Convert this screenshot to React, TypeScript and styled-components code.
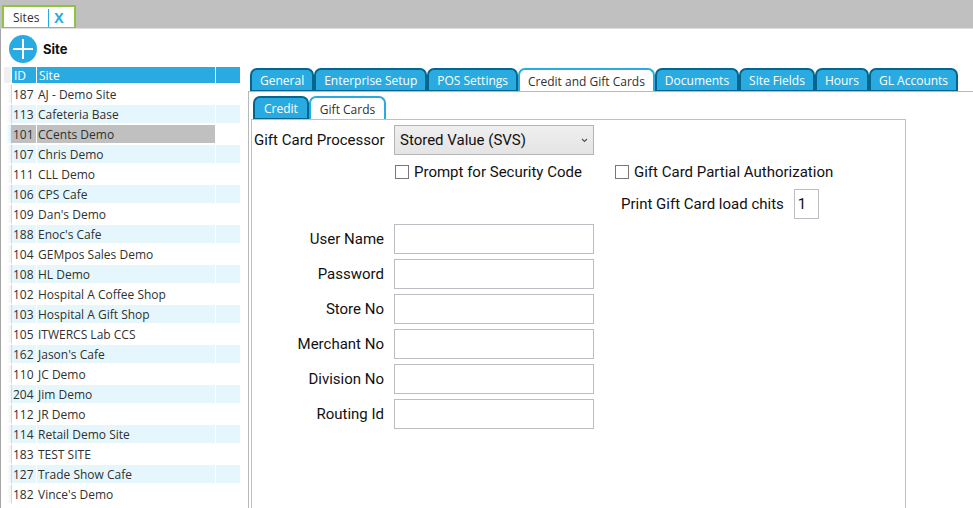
import React, { useState } from "react";
import styled, { createGlobalStyle, css } from "styled-components";

const blue = "#29abe2";
const darkBlue = "#05668d";
const uiFont = `"Segoe UI", "Open Sans", "Noto Sans", sans-serif`;
const formFont = `Roboto, "Liberation Sans", sans-serif`;

const GlobalStyle = createGlobalStyle`
  *, *::before, *::after { box-sizing: border-box; }
  html, body, #root { height: 100%; }
  body { margin: 0; overflow: hidden; background: #fff; }
  button, input, select { font: inherit; color: inherit; border-radius: 0; }
`;

const Page = styled.div`
  height: 100%;
  display: flex;
  flex-direction: column;
  font: 12px/16px ${uiFont};
  color: #303030;
`;

const WindowBar = styled.header`
  display: flex;
  padding: 5px 2px 0;
  background: #c0c0c0;
`;

const WindowTab = styled.div`
  display: flex;
  align-items: center;
  height: 23px;
  padding-top: 2px;
  border: 2px solid #8cc63f;
  border-bottom-width: 1px;
  background: #fff;
`;

const WindowTitle = styled.button`
  padding: 0 9px;
  border: 0;
  background: none;
`;

const CloseButton = styled.button`
  padding: 0 10px 0 5px;
  border: 0;
  border-left: 1px solid ${blue};
  background: none;
  color: ${blue};
  font-size: 14px;
  line-height: 18px;
  font-weight: 700;
`;

const Workspace = styled.div`
  flex: 1;
  min-height: 0;
  display: flex;
  border-top: 1px solid #dedede;
  border-left: 1px solid #a6a6a6;
`;

const Sidebar = styled.aside`
  flex: none;
  width: 247px;
  padding: 5px 7px 0 3px;
`;

const SidebarTitle = styled.div`
  display: flex;
  align-items: center;
  gap: 6px;
  height: 30px;
  margin-bottom: 3px;
  padding-left: 5px;
`;

const AddButton = styled.button`
  display: flex;
  padding: 0;
  border: 0;
  background: none;
`;

const SidebarHeading = styled.h1`
  margin: 0;
  font: 700 13px/16px Inter, "Liberation Sans", sans-serif;
  color: #111;
`;

const SiteTable = styled.table`
  width: 100%;
  table-layout: fixed;
  border-collapse: separate;
  border-spacing: 0;
`;

const HandleCol = styled.col`
  width: 8px;
`;
const IdCol = styled.col`
  width: 25px;
`;
const SpareCol = styled.col`
  width: 25px;
`;

const HeaderCell = styled.th<{ $handle?: boolean }>`
  height: 17px;
  padding: 1px 0 0 2px;
  border: 0 solid #fff;
  border-width: 0 1px 1px 0;
  background: ${(p) => (p.$handle ? "#f0f0f0" : blue)};
  color: #fff;
  font-weight: 400;
  line-height: 15px;
  text-align: left;
`;

const Cell = styled.td`
  height: 20px;
  padding: 2px 0 0 1px;
  border: 0 solid #fff;
  border-width: 1px 1px 1px 0;
  background-clip: padding-box;
  line-height: 16px;
  white-space: nowrap;
`;

const HandleCell = styled(Cell)<{ $active?: boolean }>`
  && {
    background: linear-gradient(
      to right,
      #fff 2px,
      ${(p) => (p.$active ? "#d9f1fb" : "#f4f4f4")}
    );
    background-clip: padding-box;
    border-right: 1px solid ${(p) => (p.$active ? "#8fd0f0" : "#d8d8d8")};
  }
`;

const SiteRow = styled.tr<{ $selected: boolean }>`
  cursor: default;
  &:nth-child(even) ${Cell} {
    background-color: #e5f7fd;
  }
  ${(p) =>
    p.$selected &&
    css`
      ${Cell}:nth-child(2), ${Cell}:nth-child(3) {
        background-color: #c0c0c0;
      }
    `}
`;

const Main = styled.main`
  flex: 1;
  min-width: 0;
  display: flex;
  flex-direction: column;
  padding-top: 39px;
`;

const TabList = styled.div`
  display: flex;
  padding-left: 2px;
`;

const Tab = styled.button<{ $active: boolean; $wide?: boolean }>`
  flex: none;
  height: 23px;
  padding: 2px ${(p) => (p.$wide ? 9 : 8)}px 0;
  border: 2px solid ${(p) => (p.$active ? blue : darkBlue)};
  border-bottom-width: ${(p) => (p.$active ? 0 : 1)}px;
  border-radius: 7px 7px 0 0;
  background: ${(p) => (p.$active ? "#fff" : blue)};
  color: ${(p) => (p.$active ? "#303030" : "#fff")};
  line-height: 16px;
  white-space: nowrap;
`;

const OuterPanel = styled.section`
  flex: 1;
  min-height: 0;
  display: flex;
  flex-direction: column;
  padding: 4px 67px 0 2px;
  border-top: 1px solid #b8b8b8;
  border-left: 1px solid #b8b8b8;
`;

const InnerPanel = styled.form`
  flex: 1;
  min-height: 0;
  border: 1px solid #c0c0c0;
  border-bottom: 0;
  padding: 5px 2px;
  font: 15px/20px ${formFont};
  color: #111;
`;

const FieldGrid = styled.div`
  display: grid;
  grid-template-columns: 130px 200px 1fr;
  grid-template-rows: 30px 24px;
  grid-auto-rows: 30px;
  column-gap: 10px;
  row-gap: 5px;
  align-items: center;
`;

const FieldLabel = styled.label`
  text-align: right;
  white-space: nowrap;
`;

const SelectBox = styled.div`
  display: grid;
  align-items: center;
  & > * {
    grid-area: 1 / 1;
  }
  svg {
    justify-self: end;
    margin-right: 6px;
    pointer-events: none;
  }
`;

const Select = styled.select`
  width: 100%;
  height: 30px;
  padding: 0 5px;
  border: 1px solid #b4b4b4;
  background: linear-gradient(#efefef, #e4e4e4);
  appearance: none;
`;

const TextBox = styled.input<{ $short?: boolean }>`
  width: ${(p) => (p.$short ? "25px" : "100%")};
  height: 30px;
  padding: 0 3px;
  border: 1px solid #bcbdc2;
  background: #fff;
  outline: none;
`;

const CheckLabel = styled.label<{ $inset?: boolean }>`
  display: flex;
  align-items: center;
  gap: 5px;
  margin-left: ${(p) => (p.$inset ? 11 : 1)}px;
  white-space: nowrap;
`;

const CheckBox = styled.input`
  appearance: none;
  width: 14px;
  height: 14px;
  margin: 0;
  border: 1px solid #777;
  background: #fff;
  &:checked {
    background: ${blue};
  }
`;

const ChitsField = styled.div`
  display: flex;
  align-items: center;
  gap: 10px;
  grid-column: 3;
  padding-left: 17px;
  white-space: nowrap;
`;

const OptionCell = styled.div<{ $column: number }>`
  grid-column: ${(p) => p.$column};
`;

const sites: [number, string][] = [
  [187, "AJ - Demo Site"],
  [113, "Cafeteria Base"],
  [101, "CCents Demo"],
  [107, "Chris Demo"],
  [111, "CLL Demo"],
  [106, "CPS Cafe"],
  [109, "Dan's Demo"],
  [188, "Enoc's Cafe"],
  [104, "GEMpos Sales Demo"],
  [108, "HL Demo"],
  [102, "Hospital A Coffee Shop"],
  [103, "Hospital A Gift Shop"],
  [105, "ITWERCS Lab CCS"],
  [162, "Jason's Cafe"],
  [110, "JC Demo"],
  [204, "Jim Demo"],
  [112, "JR Demo"],
  [114, "Retail Demo Site"],
  [183, "TEST SITE"],
  [127, "Trade Show Cafe"],
  [182, "Vince's Demo"],
];

const tabs = [
  "General",
  "Enterprise Setup",
  "POS Settings",
  "Credit and Gift Cards",
  "Documents",
  "Site Fields",
  "Hours",
  "GL Accounts",
];

const fields = ["User Name", "Password", "Store No", "Merchant No", "Division No", "Routing Id"];

function Tabs({ names, initial, wide }: { names: string[]; initial: string; wide?: boolean }) {
  const [active, setActive] = useState(initial);
  return (
    <TabList role="tablist">
      {names.map((name) => (
        <Tab
          key={name}
          type="button"
          role="tab"
          aria-selected={name === active}
          $active={name === active}
          $wide={wide}
          onClick={() => setActive(name)}
        >
          {name}
        </Tab>
      ))}
    </TabList>
  );
}

function SiteList() {
  const [selected, setSelected] = useState(101);
  return (
    <SiteTable>
      <colgroup>
        <HandleCol />
        <IdCol />
        <col />
        <SpareCol />
      </colgroup>
      <thead>
        <tr>
          <HeaderCell $handle />
          <HeaderCell scope="col">ID</HeaderCell>
          <HeaderCell scope="col">Site</HeaderCell>
          <HeaderCell />
        </tr>
      </thead>
      <tbody>
        {sites.map(([id, name]) => (
          <SiteRow key={id} $selected={id === selected} onClick={() => setSelected(id)}>
            <HandleCell $active={id === selected} />
            <Cell>{id}</Cell>
            <Cell>{name}</Cell>
            <Cell />
          </SiteRow>
        ))}
      </tbody>
    </SiteTable>
  );
}

export default function App() {
  return (
    <>
      <GlobalStyle />
      <Page>
        <WindowBar>
          <WindowTab>
            <WindowTitle type="button">Sites</WindowTitle>
            <CloseButton type="button" aria-label="Close Sites">
              X
            </CloseButton>
          </WindowTab>
        </WindowBar>
        <Workspace>
          <Sidebar>
            <SidebarTitle>
              <AddButton type="button" aria-label="Add site">
                <svg width="28" height="28" viewBox="0 0 28 28">
                  <circle cx="14" cy="14" r="14" fill={blue} />
                  <path d="M14 4v20M4 14h20" stroke="#fff" strokeWidth="2" />
                </svg>
              </AddButton>
              <SidebarHeading>Site</SidebarHeading>
            </SidebarTitle>
            <SiteList />
          </Sidebar>
          <Main>
            <Tabs names={tabs} initial="Credit and Gift Cards" />
            <OuterPanel>
              <Tabs names={["Credit", "Gift Cards"]} initial="Gift Cards" wide />
              <InnerPanel>
                <FieldGrid>
                  <FieldLabel htmlFor="processor">Gift Card Processor</FieldLabel>
                  <SelectBox>
                    <Select id="processor">
                      <option>Stored Value (SVS)</option>
                    </Select>
                    <svg width="7" height="5" viewBox="0 0 7 5">
                      <path d="M1 1l2.5 2.5L6 1" fill="none" stroke="#555" strokeWidth="1.2" />
                    </svg>
                  </SelectBox>
                  <OptionCell $column={2}>
                    <CheckLabel>
                      <CheckBox type="checkbox" />
                      Prompt for Security Code
                    </CheckLabel>
                  </OptionCell>
                  <OptionCell $column={3}>
                    <CheckLabel $inset>
                      <CheckBox type="checkbox" />
                      Gift Card Partial Authorization
                    </CheckLabel>
                  </OptionCell>
                  <ChitsField>
                    <label htmlFor="chits">Print Gift Card load chits</label>
                    <TextBox id="chits" $short defaultValue="1" />
                  </ChitsField>
                  {fields.map((name) => (
                    <React.Fragment key={name}>
                      <FieldLabel htmlFor={name}>{name}</FieldLabel>
                      <TextBox id={name} type={name === "Password" ? "password" : "text"} />
                      <span />
                    </React.Fragment>
                  ))}
                </FieldGrid>
              </InnerPanel>
            </OuterPanel>
          </Main>
        </Workspace>
      </Page>
    </>
  );
}
